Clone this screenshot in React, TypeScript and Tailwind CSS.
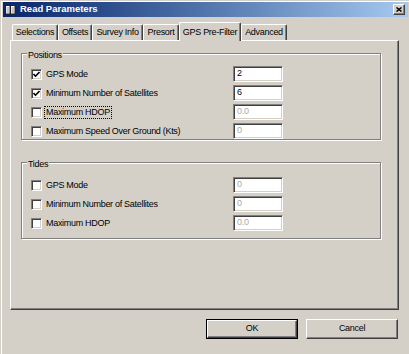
import React from "react";

function Check({ checked }: { checked?: boolean }) {
  return (
    <span className="w-[11px] h-[11px] shrink-0 bg-white border border-t-[#808080] border-l-[#808080] border-b-white border-r-white shadow-[inset_1px_1px_0_#404040,inset_-1px_-1px_0_#d4d0c8] flex items-center justify-center">
      {checked && (
        <svg width="7" height="7" viewBox="0 0 7 7">
          <polyline points="0.5,3 2.5,5.2 6.5,1" fill="none" stroke="#000" strokeWidth="1.6" />
        </svg>
      )}
    </span>
  );
}

function Field({ value, enabled }: { value: string; enabled?: boolean }) {
  return (
    <div
      className={
        "w-[50px] h-[16px] bg-white border border-t-[#808080] border-l-[#808080] border-b-white border-r-white shadow-[inset_1px_1px_0_#404040,inset_-1px_-1px_0_#d4d0c8] flex items-center pl-[3px] " +
        (enabled ? "text-black" : "text-[#a8a8a8]")
      }
    >
      {value}
    </div>
  );
}

function Row({
  label,
  checked,
  value,
  enabled,
  focus,
}: {
  label: string;
  checked?: boolean;
  value: string;
  enabled?: boolean;
  focus?: boolean;
}) {
  return (
    <div className="flex items-center h-[16px]">
      <div className="w-[202px] flex items-center gap-[4px]">
        <Check checked={checked} />
        <span className={focus ? "outline-1 outline-dotted outline-black px-[1px] -ml-[1px] leading-[11px]" : "leading-[11px]"}>
          {label}
        </span>
      </div>
      <Field value={value} enabled={enabled} />
    </div>
  );
}

function Group({ title, children, className }: { title: string; children: React.ReactNode; className?: string }) {
  return (
    <fieldset
      className={
        "w-[360px] border border-[#808080] shadow-[inset_1px_1px_0_#fff,1px_1px_0_#fff] " + (className ?? "")
      }
    >
      <legend className="ml-[5px] px-[1px] pt-[4px] bg-[#d4d0c8] leading-[10px]">{title}</legend>
      {children}
    </fieldset>
  );
}

function Tab({ label, w, selected }: { label: string; w: string; selected?: boolean }) {
  if (selected) {
    return (
      <div
        className={
          w +
          " relative z-10 h-[19px] -mb-[1px] bg-[#d4d0c8] border-t border-l border-white rounded-t-[2px] border-r border-r-[#404040] shadow-[inset_-1px_0_0_#808080] flex items-start pt-[3px] justify-center"
        }
      >
        {label}
      </div>
    );
  }
  return (
    <div
      className={
        w +
        " h-[16px] bg-[#d4d0c8] border-t border-l border-white rounded-t-[2px] border-r border-r-[#404040] shadow-[inset_-1px_0_0_#808080] flex items-center justify-center"
      }
    >
      {label}
    </div>
  );
}

export default function App() {
  return (
    <div className="w-[409px] h-[354px] bg-[#d4d0c8] pt-[2px] pl-[3px] pr-[1px] shadow-[inset_1px_1px_0_#d4d0c8,inset_2px_2px_0_#fff] font-['Liberation_Sans',Arial,sans-serif] text-[9px] tracking-[-0.3px] text-black flex flex-col overflow-hidden">
      {/* Title bar */}
      <div className="h-[15px] bg-gradient-to-r from-[#0a246a] to-[#a6caf0] flex items-center pl-[2px]">
        <svg width="11" height="10" viewBox="0 0 11 10" className="shrink-0">
          <rect x="0.5" y="0.5" width="4.5" height="8.5" fill="#fff" stroke="#222" />
          <rect x="5.5" y="0.5" width="4.5" height="8.5" fill="#fff" stroke="#222" />
          <rect x="1.5" y="2" width="2.5" height="6" fill="#c8c8c8" />
          <rect x="6.5" y="2" width="2.5" height="6" fill="#c8c8c8" />
        </svg>
        <span className="ml-[4px] text-white font-bold text-[9.5px] tracking-[0px]">Read Parameters</span>
        <div className="ml-auto mr-[3px] w-[12px] h-[11px] bg-[#d4d0c8] border border-t-white border-l-white border-b-[#404040] border-r-[#404040] shadow-[inset_-1px_-1px_0_#808080] flex items-center justify-center">
          <svg width="6" height="5" viewBox="0 0 6 5">
            <path d="M0.5 0.5 L5.5 4.5 M5.5 0.5 L0.5 4.5" stroke="#000" strokeWidth="1.5" />
          </svg>
        </div>
      </div>

      <div className="pl-[7px] flex flex-col">
        {/* Tabs */}
        <div className="mt-[5px] h-[18px] ml-[2px] flex items-end">
          <Tab label="Selections" w="w-[46px]" />
          <Tab label="Offsets" w="w-[34px]" />
          <Tab label="Survey Info" w="w-[51px]" />
          <Tab label="Presort" w="w-[36px]" />
          <Tab label="GPS Pre-Filter" w="w-[62px]" selected />
          <Tab label="Advanced" w="w-[46px]" />
        </div>

        {/* Panel */}
        <div className="w-[389px] h-[270px] border-t border-l border-white border-r border-b border-r-[#404040] border-b-[#404040] shadow-[inset_-1px_-1px_0_#808080] pt-[5px] pl-[10px]">
          <Group title="Positions">
            <div className="pl-[9px] pt-[6px] flex flex-col gap-[3px]">
              <Row label="GPS Mode" checked value="2" enabled />
              <Row label="Minimum Number of Satellites" checked value="6" enabled />
              <Row label="Maximum HDOP" value="0.0" focus />
              <Row label="Maximum Speed Over Ground (Kts)" value="0" />
            </div>
          </Group>
          <Group title="Tides" className="mt-[15px]">
            <div className="pl-[9px] pt-[8px] pb-[7px] flex flex-col gap-[3px]">
              <Row label="GPS Mode" value="0" />
              <Row label="Minimum Number of Satellites" value="0" />
              <Row label="Maximum HDOP" value="0.0" />
            </div>
          </Group>
        </div>

        {/* Buttons */}
        <div className="w-[389px] mt-[9px] flex justify-end gap-[8px] pr-[1px]">
          <div className="w-[92px] h-[20px] border border-black">
            <div className="w-full h-full border border-t-white border-l-white border-b-[#404040] border-r-[#404040] shadow-[inset_-1px_-1px_0_#808080] flex items-center justify-center">
              OK
            </div>
          </div>
          <div className="w-[92px] h-[20px] border border-t-white border-l-white border-b-[#404040] border-r-[#404040] shadow-[inset_-1px_-1px_0_#808080] flex items-center justify-center">
            Cancel
          </div>
        </div>
      </div>
    </div>
  );
}
